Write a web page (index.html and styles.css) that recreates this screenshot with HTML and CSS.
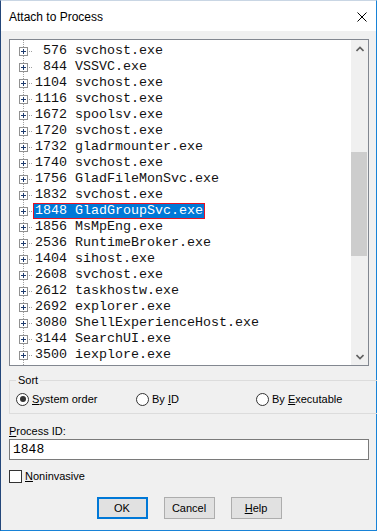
FILE: index.html
```html
<!DOCTYPE html>
<html lang="en">
<head>
  <meta charset="UTF-8">
  <title>Attach to Process</title>
  <link rel="stylesheet" href="styles.css">
</head>
<body>
  <div class="dialog">
    <div class="titlebar">
      <span class="title">Attach to Process</span>
      <svg class="close" width="10" height="10" viewBox="0 0 10 10">
        <path d="M0.5 0.5 L9.5 9.5 M9.5 0.5 L0.5 9.5" stroke="#000" stroke-width="1" fill="none"/>
      </svg>
    </div>

    <div class="content">
      <div class="proclist">
        <div class="rows">
          <div class="row"><span class="node"></span><span class="stub"></span><span class="item"> 576 svchost.exe</span></div>
          <div class="row"><span class="node"></span><span class="stub"></span><span class="item"> 844 VSSVC.exe</span></div>
          <div class="row"><span class="node"></span><span class="stub"></span><span class="item">1104 svchost.exe</span></div>
          <div class="row"><span class="node"></span><span class="stub"></span><span class="item">1116 svchost.exe</span></div>
          <div class="row"><span class="node"></span><span class="stub"></span><span class="item">1672 spoolsv.exe</span></div>
          <div class="row"><span class="node"></span><span class="stub"></span><span class="item">1720 svchost.exe</span></div>
          <div class="row"><span class="node"></span><span class="stub"></span><span class="item">1732 gladrmounter.exe</span></div>
          <div class="row"><span class="node"></span><span class="stub"></span><span class="item">1740 svchost.exe</span></div>
          <div class="row"><span class="node"></span><span class="stub"></span><span class="item">1756 GladFileMonSvc.exe</span></div>
          <div class="row"><span class="node"></span><span class="stub"></span><span class="item">1832 svchost.exe</span></div>
          <div class="row"><span class="node"></span><span class="stub"></span><span class="item selected">1848 GladGroupSvc.exe</span></div>
          <div class="row"><span class="node"></span><span class="stub"></span><span class="item">1856 MsMpEng.exe</span></div>
          <div class="row"><span class="node"></span><span class="stub"></span><span class="item">2536 RuntimeBroker.exe</span></div>
          <div class="row"><span class="node"></span><span class="stub"></span><span class="item">1404 sihost.exe</span></div>
          <div class="row"><span class="node"></span><span class="stub"></span><span class="item">2608 svchost.exe</span></div>
          <div class="row"><span class="node"></span><span class="stub"></span><span class="item">2612 taskhostw.exe</span></div>
          <div class="row"><span class="node"></span><span class="stub"></span><span class="item">2692 explorer.exe</span></div>
          <div class="row"><span class="node"></span><span class="stub"></span><span class="item">3080 ShellExperienceHost.exe</span></div>
          <div class="row"><span class="node"></span><span class="stub"></span><span class="item">3144 SearchUI.exe</span></div>
          <div class="row"><span class="node"></span><span class="stub"></span><span class="item">3500 iexplore.exe</span></div>
        </div>
        <div class="scrollbar">
          <div class="arrow">
            <svg width="8" height="6" viewBox="0 0 8 6"><path d="M0.5 5 L4 1.5 L7.5 5" stroke="#606060" stroke-width="1.6" fill="none"/></svg>
          </div>
          <div class="track"><div class="thumb"></div></div>
          <div class="arrow">
            <svg width="8" height="6" viewBox="0 0 8 6"><path d="M0.5 1 L4 4.5 L7.5 1" stroke="#606060" stroke-width="1.6" fill="none"/></svg>
          </div>
        </div>
      </div>

      <fieldset class="sort">
        <legend>Sort</legend>
        <label class="radio"><span class="circle checked"></span><span><u>S</u>ystem order</span></label>
        <label class="radio"><span class="circle"></span><span>By <u>I</u>D</span></label>
        <label class="radio"><span class="circle"></span><span>By <u>E</u>xecutable</span></label>
      </fieldset>

      <div class="field-label"><u>P</u>rocess ID:</div>
      <div class="textbox">1848</div>

      <label class="check"><span class="box"></span><span><u>N</u>oninvasive</span></label>

      <div class="buttons">
        <button class="default">OK</button>
        <button>Cancel</button>
        <button><u>H</u>elp</button>
      </div>
    </div>
  </div>
</body>
</html>
```

FILE: styles.css
```css
body {
  margin: 0;
  background: #f0f0f0;
}
.dialog {
  width: 377px;
  height: 531px;
  box-sizing: border-box;
  border: 1px solid #1883d7;
  border-top-color: #c9d6e4;
  border-left-color: #24477a;
  background: #f0f0f0;
  font-family: "Liberation Sans", Arial, sans-serif;
  font-size: 11px;
  color: #000;
}
.titlebar {
  height: 30px;
  background: #fff;
  display: flex;
  align-items: center;
  padding-left: 8px;
}
.title {
  font-size: 12px;
  flex: 1;
  margin-top: 2px;
}
.close {
  margin-right: 9px;
  margin-top: 2px;
}
.content {
  padding: 0 7px 0 8px;
}
.proclist {
  margin-top: 8px;
  height: 327px;
  box-sizing: border-box;
  border: 1px solid #828790;
  background: #fff;
  display: flex;
}
.rows {
  flex: 1;
  padding-top: 3px;
  background: repeating-linear-gradient(to bottom, #a0a0a0 0 1px, transparent 1px 2px) 13px 0 / 1px 100% no-repeat;
  font-family: "Liberation Mono", "Courier New", monospace;
  font-size: 13.33px;
  color: #111;
}
.row {
  height: 16px;
  display: flex;
  align-items: flex-start;
}
.node {
  width: 9px;
  height: 9px;
  box-sizing: border-box;
  margin: 4px 0 0 9px;
  border: 1px solid #919191;
  background:
    linear-gradient(#1e3b6e, #1e3b6e) center / 5px 1px no-repeat,
    linear-gradient(#1e3b6e, #1e3b6e) center / 1px 5px no-repeat,
    #fff;
}
.stub {
  width: 5px;
  height: 1px;
  margin-top: 8px;
  background: repeating-linear-gradient(to right, transparent 0 1px, #a0a0a0 1px 2px);
}
.item {
  white-space: pre;
  line-height: 14px;
  padding: 0 1px;
  border: 1px solid transparent;
}
.item.selected {
  background: #0078d7;
  color: #fff;
  border-color: #e81123;
}
.scrollbar {
  width: 17px;
  background: #f0f0f0;
  display: flex;
  flex-direction: column;
}
.arrow {
  height: 17px;
  display: flex;
  align-items: center;
  justify-content: center;
}
.track {
  flex: 1;
}
.thumb {
  margin: 95px 1px 0 0;
  height: 104px;
  background: #cdcdcd;
}
.sort {
  margin: 7px 0 0;
  padding: 5px 6px 7px;
  border: 1px solid #dcdcdc;
  display: flex;
}
.sort legend {
  padding: 0 2px;
  line-height: 14px;
  margin-top: 1px;
}
.radio {
  width: 120px;
  display: flex;
  align-items: center;
  gap: 3px;
  line-height: 14px;
}
.circle {
  width: 13px;
  height: 13px;
  box-sizing: border-box;
  border: 1px solid #333;
  border-radius: 50%;
  background: #fff;
  display: flex;
  align-items: center;
  justify-content: center;
}
.circle.checked::after {
  content: "";
  width: 6px;
  height: 6px;
  border-radius: 50%;
  background: #333;
}
u {
  text-underline-offset: 1px;
}
.field-label {
  margin-top: 10px;
  line-height: 14px;
}
.textbox {
  margin-top: 1px;
  height: 21px;
  box-sizing: border-box;
  border: 1px solid #7a7a7a;
  background: #fff;
  padding-left: 3px;
  font-family: "Liberation Mono", "Courier New", monospace;
  font-size: 13px;
  line-height: 19px;
}
.check {
  margin-top: 9px;
  display: flex;
  align-items: center;
  gap: 3px;
  line-height: 14px;
}
.box {
  width: 13px;
  height: 13px;
  box-sizing: border-box;
  border: 1px solid #333;
  background: #fff;
}
.buttons {
  margin-top: 14px;
  display: flex;
  justify-content: center;
  gap: 16px;
}
button {
  width: 51px;
  height: 22px;
  padding: 0;
  border: 1px solid #adadad;
  background: #e1e1e1;
  font-family: "Liberation Sans", Arial, sans-serif;
  font-size: 11px;
  color: #000;
}
button.default {
  border: 2px solid #0078d7;
}
```
